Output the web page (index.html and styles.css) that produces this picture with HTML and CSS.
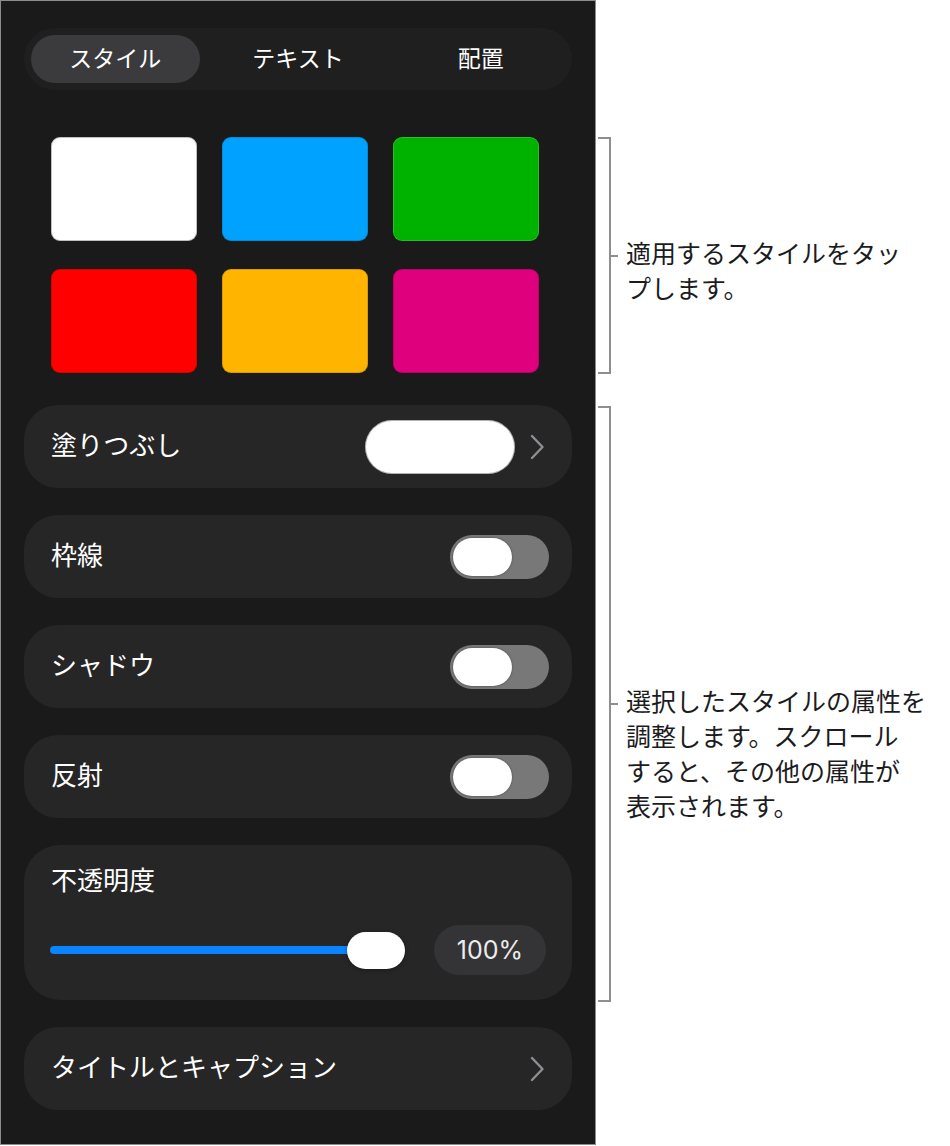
FILE: index.html
```html
<!DOCTYPE html>
<html lang="ja">
<head>
<meta charset="utf-8">
<title>スタイル</title>
<link rel="stylesheet" href="styles.css">
</head>
<body>
<div class="panel">
  <div class="seg">
    <div class="seg-item active">スタイル</div>
    <div class="seg-item">テキスト</div>
    <div class="seg-item">配置</div>
  </div>

  <div class="swatches">
    <div class="swatch sw-white"></div>
    <div class="swatch sw-blue"></div>
    <div class="swatch sw-green"></div>
    <div class="swatch sw-red"></div>
    <div class="swatch sw-orange"></div>
    <div class="swatch sw-magenta"></div>
  </div>

  <div class="settings">
    <div class="row row-chev">
      <span class="label">塗りつぶし</span>
      <div class="row-right">
        <div class="fill-pill"></div>
        <svg class="chev" width="14" height="26" viewBox="0 0 14 26"><path d="M2 2 L12.5 13 L2 24" fill="none" stroke="#8e8e93" stroke-width="2.4" stroke-linecap="round" stroke-linejoin="round"/></svg>
      </div>
    </div>
    <div class="row">
      <span class="label">枠線</span>
      <div class="toggle"><div class="knob"></div></div>
    </div>
    <div class="row">
      <span class="label">シャドウ</span>
      <div class="toggle"><div class="knob"></div></div>
    </div>
    <div class="row">
      <span class="label">反射</span>
      <div class="toggle"><div class="knob"></div></div>
    </div>
    <div class="card">
      <div class="label card-label">不透明度</div>
      <div class="slider-row">
        <div class="slider">
          <div class="track"></div>
          <div class="thumb"></div>
        </div>
        <div class="value">100%</div>
      </div>
    </div>
    <div class="row row-chev">
      <span class="label">タイトルとキャプション</span>
      <svg class="chev" width="14" height="26" viewBox="0 0 14 26"><path d="M2 2 L12.5 13 L2 24" fill="none" stroke="#8e8e93" stroke-width="2.4" stroke-linecap="round" stroke-linejoin="round"/></svg>
    </div>
  </div>
</div>

<div class="notes">
  <div class="bracket b1">
    <div class="bline"></div>
    <div class="bright">
      <div class="bhalf"></div>
      <div class="bhalf">
        <div class="bnote">
          <div class="btick"></div>
          <div class="btext">適用するスタイルをタッ<br>プします。</div>
        </div>
      </div>
    </div>
  </div>
  <div class="bracket b2">
    <div class="bline"></div>
    <div class="bright">
      <div class="bhalf"></div>
      <div class="bhalf">
        <div class="bnote">
          <div class="btick"></div>
          <div class="btext">選択したスタイルの属性を<br>調整します。スクロール<br>すると、その他の属性が<br>表示されます。</div>
        </div>
      </div>
    </div>
  </div>
</div>
</body>
</html>
```

FILE: styles.css
```css
* { box-sizing: border-box; }

body {
  margin: 0;
  background: #ffffff;
  display: flex;
  align-items: flex-start;
  font-family: "Noto Sans CJK JP", "Noto Sans", sans-serif;
}

.panel {
  width: 596px;
  height: 1145px;
  border: 1px solid #8c8c8c;
  background: #1a1a1a;
  padding: 27px 23px 0 23px;
  display: flex;
  flex-direction: column;
}

/* segmented control */
.seg {
  height: 62px;
  border-radius: 31px;
  background: #1f1f20;
  display: grid;
  grid-template-columns: repeat(3, 1fr);
}
.seg-item {
  display: flex;
  align-items: center;
  justify-content: center;
  color: #ffffff;
  font-size: 23px;
  padding-bottom: 4px;
}
.seg-item.active {
  margin: 7px;
  border-radius: 24px;
  background: #3b3b3d;
}

/* swatches */
.swatches {
  margin-top: 47px;
  padding: 0 27px;
  display: grid;
  grid-template-columns: repeat(3, 146px);
  grid-auto-rows: 104px;
  column-gap: 25px;
  row-gap: 28px;
}
.swatch {
  border-radius: 9px;
  box-shadow: inset 0 0 0 1px rgba(0, 0, 0, 0.14);
}
.sw-white { background: #ffffff; box-shadow: inset 0 0 0 1px rgba(0,0,0,0.25); }
.sw-blue { background: #00a2ff; }
.sw-green { background: #00b200; box-shadow: inset 0 0 0 1px rgba(255,255,255,0.15); }
.sw-red { background: #ff0000; }
.sw-orange { background: #ffb400; }
.sw-magenta { background: #de007d; }

/* settings rows */
.settings {
  margin-top: 32px;
  display: flex;
  flex-direction: column;
  gap: 27px;
}
.row {
  height: 83px;
  border-radius: 34px;
  background: #262626;
  display: flex;
  align-items: center;
  justify-content: space-between;
  padding: 0 23px 0 27px;
}
.row.row-chev { padding-right: 28px; }
.label {
  color: #ffffff;
  font-size: 26px;
  line-height: 30px;
}
.row > .label { padding-bottom: 6px; }
.row-right {
  display: flex;
  align-items: center;
  gap: 15px;
}
.fill-pill {
  width: 150px;
  height: 54px;
  border-radius: 27px;
  background: #ffffff;
  box-shadow: inset 0 0 0 1px rgba(0, 0, 0, 0.3);
}
.chev { display: block; }

.toggle {
  width: 99px;
  height: 44px;
  border-radius: 22px;
  background: #787878;
  padding: 3px;
}
.knob {
  width: 59px;
  height: 38px;
  border-radius: 19px;
  background: #ffffff;
  box-shadow: 0 0 2px rgba(0, 0, 0, 0.5);
}

/* opacity card */
.card {
  height: 155px;
  border-radius: 36px;
  background: #262626;
  padding: 19px 26px 25px 26px;
  display: flex;
  flex-direction: column;
}
.card-label { padding-left: 1px; }
.slider-row {
  margin-top: 31px;
  height: 50px;
  display: flex;
  align-items: center;
  gap: 29px;
}
.slider {
  flex: 1;
  display: flex;
  align-items: center;
}
.track {
  flex: 1;
  height: 8px;
  border-radius: 4px;
  background: #0a84ff;
}
.thumb {
  width: 58px;
  height: 37px;
  border-radius: 19px;
  background: #ffffff;
  margin-left: -4px;
  box-shadow: 0 1px 4px rgba(0, 0, 0, 0.35);
}
.value {
  width: 112px;
  height: 50px;
  border-radius: 25px;
  background: #343436;
  color: #ececec;
  font-family: "Inter", "Noto Sans", sans-serif;
  font-size: 25px;
  display: flex;
  align-items: center;
  justify-content: center;
}

/* annotations */
.notes {
  margin-top: 137px;
  margin-left: 2px;
  display: flex;
  flex-direction: column;
  gap: 32px;
}
.bracket {
  display: flex;
}
.b1 { height: 237px; }
.b2 { height: 596px; }
.bline {
  width: 13px;
  border: 2px solid #8e8e8e;
  border-left: none;
}
.bright {
  display: flex;
  flex-direction: column;
}
.bhalf { flex: 1; }
.bnote {
  display: flex;
  align-items: flex-start;
  margin-top: -21px;
}
.btick {
  width: 7px;
  height: 2px;
  background: #8e8e8e;
  margin-top: 20px;
}
.btext {
  margin-left: 8px;
  font-size: 25px;
  line-height: 35px;
  color: #1c1c1e;
  white-space: nowrap;
}
```
